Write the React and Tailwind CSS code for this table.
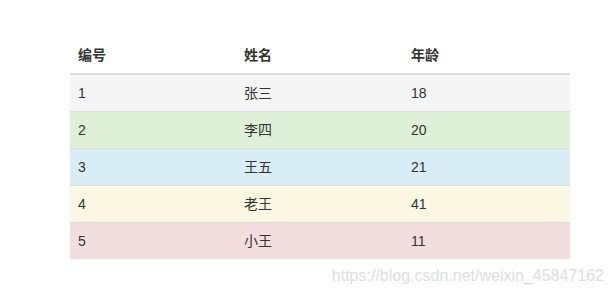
const rows = [
  { id: '1', name: '张三', age: '18', bg: 'bg-[#f5f5f5]' },
  { id: '2', name: '李四', age: '20', bg: 'bg-[#dff0d8]' },
  { id: '3', name: '王五', age: '21', bg: 'bg-[#d9edf7]' },
  { id: '4', name: '老王', age: '41', bg: 'bg-[#fcf8e3]' },
  { id: '5', name: '小王', age: '11', bg: 'bg-[#f2dede]' },
]

export default function App() {
  return (
    <div className="w-[615px] h-[293px] bg-white text-[#333] text-[14px] leading-[20px] font-['Liberation_Sans','Noto_Sans_CJK_SC',sans-serif]">
      <div className="pt-[37px] pl-[70px]">
        <table className="w-[500px] border-collapse table-fixed">
          <thead>
            <tr>
              <th className="w-[166px] text-left font-bold px-[8px] py-[8px] border-b-2 border-[#ddd]">编号</th>
              <th className="w-[167px] text-left font-bold px-[8px] py-[8px] border-b-2 border-[#ddd]">姓名</th>
              <th className="text-left font-bold px-[8px] py-[8px] border-b-2 border-[#ddd]">年龄</th>
            </tr>
          </thead>
          <tbody>
            {rows.map((r, i) => (
              <tr key={r.id} className={r.bg}>
                <td className={`px-[8px] py-[8px] ${i ? 'border-t border-[#ddd]' : ''}`}>{r.id}</td>
                <td className={`px-[8px] py-[8px] ${i ? 'border-t border-[#ddd]' : ''}`}>{r.name}</td>
                <td className={`px-[8px] py-[8px] ${i ? 'border-t border-[#ddd]' : ''}`}>{r.age}</td>
              </tr>
            ))}
          </tbody>
        </table>
      </div>
      <div className="flex justify-end pr-[11px] pt-[7px] text-[16px] leading-[20px] text-[#dedede]">
        https://blog.csdn.net/weixin_45847162
      </div>
    </div>
  )
}
